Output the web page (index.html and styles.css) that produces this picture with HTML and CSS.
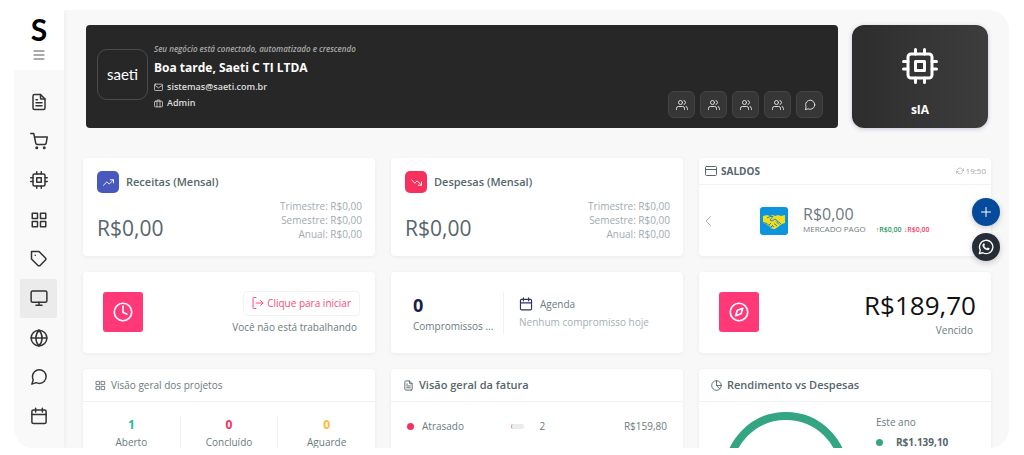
FILE: index.html
```html
<!DOCTYPE html>
<html lang="pt-BR">
<head>
    <meta charset="UTF-8">
    <meta name="viewport" content="width=device-width, initial-scale=1">
    <title>Saeti</title>
    <link rel="stylesheet" href="styles.css">
</head>
<body>
<svg class="sprite" aria-hidden="true">
    <symbol id="i-file" viewBox="0 0 24 24"><path d="M14 2v5a1 1 0 0 0 1 1h5"/><path d="M18 22H6a2 2 0 0 1-2-2V4a2 2 0 0 1 2-2h8l6 6v12a2 2 0 0 1-2 2zM8 9h2M8 13h8M8 17h8"/></symbol>
    <symbol id="i-cart" viewBox="0 0 24 24"><circle cx="9" cy="21" r="1"/><circle cx="19" cy="21" r="1"/><path d="M1 2h4l2.700 13a2 2 0 0 0 2 1.600h9.900a2 2 0 0 0 2-1.600L23 6.500H6"/></symbol>
    <symbol id="i-cpu" viewBox="0 0 24 24"><rect x="4" y="4" width="16" height="16" rx="2"/><path d="M9 9h6v6H9zM9 1v3M15 1v3M9 20v3M15 20v3M20 9h3M20 14h3M1 9h3M1 14h3"/></symbol>
    <symbol id="i-grid" viewBox="0 0 24 24"><path d="M3 3h7v7H3zM14 3h7v7h-7zM14 14h7v7h-7zM3 14h7v7H3z"/></symbol>
    <symbol id="i-tag" viewBox="0 0 24 24"><path d="M20.590 13.410l-7.170 7.170a2 2 0 0 1-2.830 0L2 12V2h10l8.590 8.590a2 2 0 0 1 0 2.820zM7 7h.01"/></symbol>
    <symbol id="i-monitor" viewBox="0 0 24 24"><rect x="1.500" y="2.500" width="21" height="15" rx="2"/><path d="M8 21.500h8M12 17.500v4"/></symbol>
    <symbol id="i-globe" viewBox="0 0 24 24"><circle cx="12" cy="12" r="10.500"/><path d="M1.500 12h21M12 1.500a16 16 0 0 1 4.200 10.500A16 16 0 0 1 12 22.500 16 16 0 0 1 7.800 12 16 16 0 0 1 12 1.500z"/></symbol>
    <symbol id="i-chat" viewBox="0 0 24 24"><path d="M21.500 11.500a9 9 0 0 1-9.200 9 9.400 9.400 0 0 1-4.100-1L2.500 21.500l1.800-5.700a9 9 0 0 1-1-4.300 9.100 9.100 0 0 1 18.200 0z"/></symbol>
    <symbol id="i-calendar" viewBox="0 0 24 24"><rect x="2.500" y="4" width="19" height="18" rx="2"/><path d="M16.500 1.500v5M7.500 1.500v5M2.500 10h19"/></symbol>
    <symbol id="i-menu" viewBox="0 0 24 24"><path d="M2 4h20M2 12h20M2 20h20"/></symbol>
    <symbol id="i-mail" viewBox="0 0 24 24"><rect x="1.500" y="3" width="21" height="17" rx="2"/><path d="M2 6l10 7 10-7"/></symbol>
    <symbol id="i-case" viewBox="0 0 24 24"><rect x="1.500" y="6" width="21" height="15" rx="2"/><path d="M8 21V3h8v18"/></symbol>
    <symbol id="i-users" viewBox="0 0 24 24"><path d="M17 21v-2a4 4 0 0 0-4-4H5a4 4 0 0 0-4 4v2"/><circle cx="9" cy="7" r="4"/><path d="M23 21v-2a4 4 0 0 0-3-3.870M16 3.130a4 4 0 0 1 0 7.750"/></symbol>
    <symbol id="i-up" viewBox="0 0 24 24"><path d="M23 6l-9.500 9.500-5-5L1 18M16 6h7v7"/></symbol>
    <symbol id="i-down" viewBox="0 0 24 24"><path d="M23 18l-9.500-9.500-5 5L1 6M16 18h7v-7"/></symbol>
    <symbol id="i-card" viewBox="0 0 24 24"><rect x="1" y="3" width="22" height="18" rx="2"/><path d="M1 9h22"/></symbol>
    <symbol id="i-refresh" viewBox="0 0 24 24"><path d="M23 5v6h-6M1 19v-6h6M3.500 9a9 9 0 0 1 15-3.400L23 11M1 13l4.600 5.400A9 9 0 0 0 20.500 15"/></symbol>
    <symbol id="i-left" viewBox="0 0 24 24"><path d="M17 3L8 12l9 9"/></symbol>
    <symbol id="i-clock" viewBox="0 0 24 24"><circle cx="12" cy="12" r="10.500"/><path d="M12 5v7.500l4.500 2"/></symbol>
    <symbol id="i-enter" viewBox="0 0 24 24"><path d="M8 1H4a2 2 0 0 0-2 2v18a2 2 0 0 0 2 2h4M8 12h14M17 7l5 5-5 5"/></symbol>
    <symbol id="i-compass" viewBox="0 0 24 24"><circle cx="12" cy="12" r="10.500"/><path d="M16.500 7.500l-2 6.500-6.500 2.500 2-6.500z"/></symbol>
    <symbol id="i-pie" viewBox="0 0 24 24"><circle cx="12" cy="12" r="10.500"/><path d="M12 1.500V12h10.500M12 12l7 7.500"/></symbol>
    <symbol id="i-plus" viewBox="0 0 24 24"><path d="M12 3v18M3 12h18"/></symbol>
    <symbol id="i-whats" viewBox="0 0 24 24"><path d="M2 22l1.500-5.300A10 10 0 1 1 7.300 20.600z"/><path class="solid" d="M8.200 6.600c.5-.4 1-.3 1.300.3l.8 1.800c.2.500-.5 1.200-.9 1.700.8 1.700 2.200 3 4 3.700.5-.5 1-1.500 1.600-1.200l2 1c.6.300.3 1.300-.1 1.900-1 1.400-3 1.200-4.800.4-2.300-1-4.200-2.800-5.100-4.900-.7-1.700-.4-3.700 1.200-4.700z"/></symbol>
</svg>

<div class="app">
    <aside class="sidebar">
        <div class="brand">
            <a class="brand-logo" href="#">S</a>
            <button class="menu-btn" aria-label="Menu"><svg class="icon"><use href="#i-menu"/></svg></button>
        </div>
        <nav class="nav">
            <a href="#" aria-label="Documentos"><svg class="icon"><use href="#i-file"/></svg></a>
            <a href="#" aria-label="Vendas"><svg class="icon"><use href="#i-cart"/></svg></a>
            <a href="#" aria-label="sIA"><svg class="icon"><use href="#i-cpu"/></svg></a>
            <a href="#" aria-label="Projetos"><svg class="icon"><use href="#i-grid"/></svg></a>
            <a href="#" aria-label="Etiquetas"><svg class="icon"><use href="#i-tag"/></svg></a>
            <a href="#" class="active" aria-label="Painel"><svg class="icon"><use href="#i-monitor"/></svg></a>
            <a href="#" aria-label="Site"><svg class="icon"><use href="#i-globe"/></svg></a>
            <a href="#" aria-label="Mensagens"><svg class="icon"><use href="#i-chat"/></svg></a>
            <a href="#" aria-label="Agenda"><svg class="icon"><use href="#i-calendar"/></svg></a>
        </nav>
    </aside>

    <main class="main">
        <div class="top">
            <section class="hero">
                <div class="hero-logo">saeti</div>
                <div class="hero-info">
                    <p class="tagline">Seu negócio está conectado, automatizado e crescendo</p>
                    <h1>Boa tarde, Saeti C TI LTDA</h1>
                    <p class="meta"><svg class="icon"><use href="#i-mail"/></svg>sistemas@saeti.com.br</p>
                    <p class="meta"><svg class="icon"><use href="#i-case"/></svg>Admin</p>
                </div>
                <div class="hero-actions">
                    <button aria-label="Clientes"><svg class="icon"><use href="#i-users"/></svg></button>
                    <button aria-label="Equipe"><svg class="icon"><use href="#i-users"/></svg></button>
                    <button aria-label="Contatos"><svg class="icon"><use href="#i-users"/></svg></button>
                    <button aria-label="Grupos"><svg class="icon"><use href="#i-users"/></svg></button>
                    <button aria-label="Mensagens"><svg class="icon"><use href="#i-chat"/></svg></button>
                </div>
            </section>
            <a class="sia" href="#"><svg class="icon"><use href="#i-cpu"/></svg>sIA</a>
        </div>

        <div class="cards">
            <section class="card finance">
                <h2><span class="badge blue"><svg class="icon"><use href="#i-up"/></svg></span>Receitas (Mensal)</h2>
                <div class="finance-body">
                    <span class="amount">R$0,00</span>
                    <ul>
                        <li>Trimestre: R$0,00</li>
                        <li>Semestre: R$0,00</li>
                        <li>Anual: R$0,00</li>
                    </ul>
                </div>
            </section>
            <section class="card finance">
                <h2><span class="badge red"><svg class="icon"><use href="#i-down"/></svg></span>Despesas (Mensal)</h2>
                <div class="finance-body">
                    <span class="amount">R$0,00</span>
                    <ul>
                        <li>Trimestre: R$0,00</li>
                        <li>Semestre: R$0,00</li>
                        <li>Anual: R$0,00</li>
                    </ul>
                </div>
            </section>
            <section class="card balance">
                <div class="balance-head">
                    <h2><svg class="icon"><use href="#i-card"/></svg>SALDOS</h2>
                    <span class="time"><svg class="icon"><use href="#i-refresh"/></svg>19:50</span>
                </div>
                <div class="balance-body">
                    <button class="prev" aria-label="Anterior"><svg class="icon"><use href="#i-left"/></svg></button>
                    <span class="bank">
                        <svg viewBox="0 0 28 28">
                            <path fill="#f5dc1c" d="M3 9l4-1 3 1 3-1 2 1 3-1 3 1 4-1v8l-3 1-7 5-3 0-6-5-3-1z"/>
                            <path fill="none" stroke="#168fca" d="M3 15.500l4 1 5 5M7 11l3-1.500 3 0-3 3.500 2 1 3-2 6 5M9 18l2-2M11 20l2-2M14 20l-2-1.500M17 19l-3-2.500M19 17.500l-3-3"/>
                        </svg>
                    </span>
                    <div>
                        <div class="balance-value">R$0,00</div>
                        <div class="balance-info">MERCADO PAGO <span><b class="in">↑R$0,00</b> <b class="out">↓R$0,00</b></span></div>
                    </div>
                </div>
            </section>

            <section class="card tile">
                <span class="square"><svg class="icon"><use href="#i-clock"/></svg></span>
                <div class="tile-text timer">
                    <button class="start"><svg class="icon"><use href="#i-enter"/></svg>Clique para iniciar</button>
                    <p>Você não está trabalhando</p>
                </div>
            </section>
            <section class="card agenda">
                <div class="count">
                    <strong>0</strong>
                    <p>Compromissos ...</p>
                </div>
                <div class="events">
                    <h2><svg class="icon"><use href="#i-calendar"/></svg>Agenda</h2>
                    <p>Nenhum compromisso hoje</p>
                </div>
            </section>
            <section class="card tile">
                <span class="square"><svg class="icon"><use href="#i-compass"/></svg></span>
                <div class="tile-text">
                    <div class="due">R$189,70</div>
                    <p>Vencido</p>
                </div>
            </section>

            <section class="card panel">
                <h2 class="light"><svg class="icon"><use href="#i-grid"/></svg>Visão geral dos projetos</h2>
                <div class="stats">
                    <div><strong class="green">1</strong>Aberto</div>
                    <div><strong class="pink">0</strong>Concluído</div>
                    <div><strong class="yellow">0</strong>Aguarde</div>
                </div>
            </section>
            <section class="card panel">
                <h2><svg class="icon"><use href="#i-file"/></svg>Visão geral da fatura</h2>
                <table class="invoices">
                    <tr>
                        <td class="status"><span class="dot"></span>Atrasado</td>
                        <td class="share"><span class="bar"></span></td>
                        <td>2</td>
                        <td>R$159,80</td>
                    </tr>
                </table>
            </section>
            <section class="card panel">
                <h2><svg class="icon"><use href="#i-pie"/></svg>Rendimento vs Despesas</h2>
                <div class="income">
                    <svg class="donut" viewBox="0 0 124 124"><circle cx="62" cy="62" r="58"/></svg>
                    <div>
                        <p>Este ano</p>
                        <p class="total"><span class="dot"></span>R$1.139,10</p>
                    </div>
                </div>
            </section>
        </div>
    </main>

    <div class="floating">
        <button class="add" aria-label="Adicionar"><svg class="icon"><use href="#i-plus"/></svg></button>
        <button class="whats" aria-label="WhatsApp"><svg class="icon"><use href="#i-whats"/></svg></button>
    </div>
</div>
</body>
</html>
```
FILE: styles.css
```css
* {
    box-sizing: border-box;
    padding: 0;
    margin: 0;
}

body {
    background: #fff;
    color: #6c7a80;
    font: 11px/16px "Open Sans", "Noto Sans", sans-serif;
}

a {
    color: inherit;
    text-decoration: none;
}

button {
    display: flex;
    align-items: center;
    justify-content: center;
    border: 0;
    background: none;
    color: inherit;
    font: inherit;
    cursor: pointer;
}

ul {
    list-style: none;
}

.sprite {
    display: none;
}

.icon {
    flex: none;
    width: 12px;
    height: 12px;
    fill: none;
    stroke: currentColor;
    stroke-width: 2;
    stroke-linecap: round;
    stroke-linejoin: round;
}

.solid {
    fill: currentColor;
    stroke: none;
}

.app {
    position: relative;
    display: flex;
    height: calc(100vh - 17px);
    margin: 10px 15px 7px 14px;
    overflow: hidden;
    border-radius: 20px;
    background: #f8f8f8;
}

/* sidebar */
.sidebar {
    display: flex;
    flex: none;
    flex-direction: column;
    width: 50px;
    background: #f9f9f9;
    box-shadow: 0 0 5px rgba(0, 0, 0, .07);
}

.brand {
    display: flex;
    flex-direction: column;
    align-items: center;
    height: 60px;
    background: #fff;
}

.brand-logo {
    color: #000;
    font-family: Lato, "Open Sans", sans-serif;
    font-size: 30px;
    font-weight: 700;
    line-height: 38px;
}

.menu-btn {
    width: 20px;
    height: 14px;
    color: #555;
}

.nav {
    display: flex;
    flex: 1;
    flex-direction: column;
    padding: 12px 7px 12px 6px;
}

.nav a {
    display: flex;
    flex: 1;
    align-items: center;
    justify-content: center;
    border-radius: 2px;
    color: #333;
}

.nav .active {
    background: #ebebeb;
}

.nav .icon {
    width: 18px;
    height: 18px;
}

/* top row */
.main {
    flex: 1;
    min-width: 0;
    padding: 15px 18px 0 19px;
}

.top {
    display: flex;
    gap: 14px;
    margin: 0 3px 30px;
}

.hero {
    display: flex;
    flex: 1;
    min-height: 103px;
    padding: 16px 15px 10px 11px;
    border-radius: 4px;
    background: #272727;
    color: #ddd;
}

.hero-logo {
    width: 51px;
    margin: 8px 6px auto 0;
    border: 1px solid #4c4c4c;
    border-radius: 10px;
    color: #fff;
    font-family: Lato, "Open Sans", sans-serif;
    font-size: 15px;
    line-height: 49px;
    text-align: center;
}

.hero-info {
    flex: 1;
}

.tagline {
    color: #aaa;
    font-size: 8px;
    font-style: italic;
    font-weight: 600;
    line-height: 16px;
}

.hero h1 {
    color: #fff;
    font-size: 12px;
    font-weight: 700;
    line-height: 22px;
}

.meta {
    display: flex;
    align-items: center;
    gap: 4px;
    font-size: 9px;
    font-weight: 600;
}

.meta .icon {
    width: 9px;
    height: 9px;
}

.hero-actions {
    display: flex;
    align-self: flex-end;
    gap: 5px;
}

.hero-actions button {
    width: 27px;
    height: 27px;
    border: 1px solid #444;
    border-radius: 6px;
    background: #363636;
}

.sia {
    display: flex;
    flex: none;
    flex-direction: column;
    align-items: center;
    justify-content: center;
    gap: 18px;
    width: 136px;
    padding-top: 12px;
    border-radius: 12px;
    background: linear-gradient(90deg, #2d2d2d, #3d3d3d);
    box-shadow: 0 1px 4px rgba(80, 80, 160, .3);
    color: #fff;
    font-size: 12px;
    font-weight: 700;
}

.sia .icon {
    width: 36px;
    height: 36px;
}

/* cards */
.cards {
    display: grid;
    grid-template-columns: repeat(3, minmax(0, 1fr));
    gap: 16px;
}

.card {
    border-radius: 4px;
    background: #fff;
    box-shadow: 0 1px 4px rgba(0, 0, 0, .06);
}

.card h2 {
    display: flex;
    align-items: center;
    color: #56666d;
    font-size: 11px;
    font-weight: 600;
}

.finance {
    padding: 13px 13px 15px 14px;
}

.finance h2 {
    gap: 7px;
}

.badge {
    display: flex;
    align-items: center;
    justify-content: center;
    width: 22px;
    height: 22px;
    border-radius: 5px;
    color: #fff;
}

.badge .icon {
    width: 11px;
    height: 11px;
}

.blue {
    background: #4859bd;
}

.red {
    background: #f7315e;
}

.finance-body {
    display: flex;
    align-items: flex-end;
    justify-content: space-between;
    margin-top: 6px;
}

.amount {
    color: #56666d;
    font-size: 21px;
    line-height: 26px;
}

.finance li {
    color: #a1abb0;
    font-size: 10px;
    line-height: 14px;
    text-align: right;
}

.balance-head {
    display: flex;
    justify-content: space-between;
    padding: 5px 5px 5px 6px;
    border-bottom: 1px solid #f2f2f2;
}

.balance h2 {
    gap: 4px;
    font-size: 10px;
    font-weight: 700;
}

.time {
    display: flex;
    align-items: center;
    gap: 2px;
    color: #a1a8ac;
    font-size: 8px;
}

.time .icon {
    width: 8px;
    height: 8px;
}

.balance-body {
    display: flex;
    align-items: center;
    padding: 20px 2px 0;
}

.prev {
    width: 14px;
    color: #aaa;
}

.bank {
    display: flex;
    width: 28px;
    height: 28px;
    margin: 0 15px 0 45px;
    border-radius: 3px;
    background: #0c95dc;
    box-shadow: 0 0 0 5px #fcfcfc;
}

.balance-value {
    font-size: 16px;
    line-height: 18px;
}

.balance-info {
    display: flex;
    gap: 10px;
    font-size: 8px;
    line-height: 12px;
}

.balance-info b {
    font-size: 7px;
    font-weight: 600;
}

.in {
    color: #1d9a5b;
}

.out {
    color: #f7406c;
}

.tile {
    display: flex;
    align-items: center;
    justify-content: space-between;
    padding: 15px 15px 16px 20px;
}

.square {
    display: flex;
    align-items: center;
    justify-content: center;
    width: 40px;
    height: 40px;
    border-radius: 3px;
    background: #ff3877;
    color: #fff;
}

.square .icon {
    width: 20px;
    height: 20px;
}

.tile-text {
    font-size: 10px;
    line-height: 14px;
    text-align: right;
}

.timer p {
    padding: 4px 3px 0 0;
}

.start {
    gap: 3px;
    height: 25px;
    margin-left: auto;
    padding: 0 8px;
    border: 1px solid #f2f2f2;
    border-radius: 4px;
    color: #fa4b78;
}

.due {
    color: #111;
    font-size: 26px;
    line-height: 36px;
}

.due + p {
    padding-right: 3px;
}

.agenda {
    display: flex;
    align-items: center;
    padding: 0 22px;
    font-size: 10px;
    white-space: nowrap;
}

.count {
    width: 91px;
    border-right: 1px solid #f0f0f0;
}

.count strong {
    display: block;
    color: #16204f;
    font-size: 18px;
    line-height: 26px;
}

.events {
    padding-left: 15px;
    line-height: 18px;
}

.events h2 {
    gap: 7px;
    color: #6c7a80;
    font-size: 10px;
    font-weight: 400;
}

.events .icon {
    width: 14px;
    height: 14px;
    color: #2b335f;
}

.events p {
    color: #a7afb3;
}

.panel h2 {
    gap: 5px;
    padding: 8px 12px;
    border-bottom: 1px solid #f2f2f2;
}

.panel .light {
    color: #6c7a80;
    font-size: 10px;
    font-weight: 400;
}

.panel .icon {
    width: 11px;
    height: 11px;
}

.stats {
    display: flex;
    padding-top: 14px;
    text-align: center;
}

.stats div {
    flex: 1;
    height: 50px;
    font-size: 10px;
}

.stats div + div {
    border-left: 1px solid #f0f0f0;
}

.stats strong {
    display: block;
    font-size: 12px;
    line-height: 18px;
}

.green {
    color: #1abc9c;
}

.pink {
    color: #f7315e;
}

.yellow {
    color: #ffb937;
}

.invoices {
    width: 100%;
    padding: 14px 16px 0;
    border-spacing: 0;
    font-size: 10px;
    line-height: 20px;
}

.invoices .status {
    width: 40%;
}

.invoices .share {
    width: 11%;
}

.invoices td:last-child {
    text-align: right;
}

.dot {
    display: inline-block;
    width: 7px;
    height: 7px;
    margin-right: 8px;
    border-radius: 50%;
    background: #f7315e;
}

.bar {
    display: block;
    width: 13px;
    height: 5px;
    border-left: 1px solid #f58aa4;
    border-radius: 2px;
    background: #e8ebef;
}

.income {
    display: flex;
    gap: 28px;
    padding: 10px 25px 0;
}

.income p {
    font-size: 10px;
    line-height: 20px;
}

.income .total {
    color: #56666d;
    font-weight: 700;
}

.income .dot {
    margin-right: 13px;
    background: #34a583;
}

.donut {
    flex: none;
    width: 124px;
    height: 124px;
    fill: none;
    stroke: #34a583;
    stroke-width: 8;
}

/* buttons over the page */
.floating {
    position: absolute;
    top: 188px;
    right: 9px;
    display: flex;
    flex-direction: column;
    gap: 7px;
}

.floating button {
    width: 28px;
    height: 28px;
    border-radius: 50%;
    box-shadow: 0 2px 6px rgba(0, 0, 0, .2);
    color: #fff;
}

.add {
    background: #064a9c;
}

.whats {
    background: #262d38;
}

.whats .icon {
    width: 16px;
    height: 16px;
}
```
